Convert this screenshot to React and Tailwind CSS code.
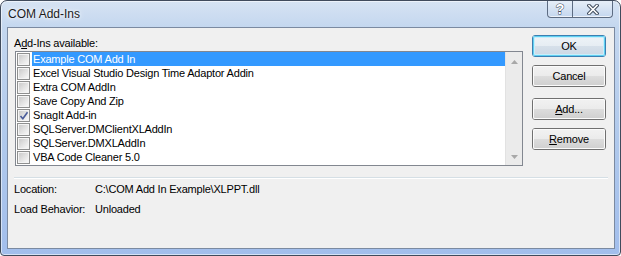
import React from 'react';

const items = [
  { label: 'Example COM Add In', sel: true },
  { label: 'Excel Visual Studio Design Time Adaptor Addin' },
  { label: 'Extra COM AddIn' },
  { label: 'Save Copy And Zip' },
  { label: 'SnagIt Add-in', checked: true },
  { label: 'SQLServer.DMClientXLAddIn' },
  { label: 'SQLServer.DMXLAddIn' },
  { label: 'VBA Code Cleaner 5.0' },
];

function Checkbox({ checked }) {
  return (
    <div className="relative w-[13px] h-[13px] shrink-0 border border-[#8e8f8f] bg-[#f4f4f4] p-px">
      <div className="w-full h-full bg-[linear-gradient(135deg,#cbcbcb_0%,#e4e4e4_55%,#f7f7f7_100%)]" />
      {checked && (
        <svg className="absolute left-[1px] top-[1px]" width="10" height="10" viewBox="0 0 10 10">
          <path d="M1.5 5 L3.8 7.8 L8.5 1.2" fill="none" stroke="#4a5c9a" strokeWidth="1.6" strokeLinejoin="round" />
        </svg>
      )}
    </div>
  );
}

function Btn({ children, def }) {
  return (
    <div
      className={`h-[22px] w-[74px] rounded-[3px] border p-0 ${def ? 'border-[#3c7fb1]' : 'border-[#707070]'}`}
    >
      <div
        className={`w-full h-full rounded-[2px] flex items-center justify-center text-black ${
          def
            ? 'bg-[linear-gradient(180deg,#eef3f7_0%,#e6edf3_50%,#d6e0ea_50%,#ccd8e4_100%)] shadow-[inset_0_0_0_1px_#5fd0f2,inset_0_0_0_2px_#c8eefb]'
            : 'bg-[linear-gradient(180deg,#f2f2f2_0%,#ebebeb_50%,#dddddd_50%,#cfcfcf_100%)] shadow-[inset_0_0_0_1px_#fbfbfb]'
        }`}
      >
        {children}
      </div>
    </div>
  );
}

export default function App() {
  return (
    <div className="w-[621px] h-[256px] bg-white font-['Liberation_Sans',Arial,sans-serif] text-[11px] tracking-[-0.2px] text-black">
      <div className="w-full h-full flex flex-col rounded-t-[7px] rounded-b-[4px] border border-[#404b5c] bg-[linear-gradient(180deg,#d6e3f3_0px,#c4d7ef_26px,#b0c9ec_55%,#a2beec_100%)] shadow-[inset_0_0_0_1px_rgba(255,255,255,0.55)]">
        {/* Title bar */}
        <div className="h-[26px] flex items-start justify-between">
          <div className="pl-[7px] h-[26px] leading-[26px] text-[12px] tracking-normal text-[#1b1b1b] [text-shadow:0_0_6px_#fff,0_0_3px_#fff]">
            COM Add-Ins
          </div>
          <div className="mr-[7px] flex h-[17px] border border-t-0 border-[#5d6c82] rounded-b-[4px] overflow-hidden bg-[linear-gradient(180deg,#e6eef8_0%,#d6e3f3_50%,#c4d7ef_100%)] shadow-[inset_0_-1px_0_rgba(255,255,255,0.7)]">
            <div className="w-[25px] h-full flex items-center justify-center border-r border-[#5d6c82]">
              <svg width="10" height="14" viewBox="0 0 10 14">
                <text x="5" y="12" textAnchor="middle" fontSize="14" fontWeight="bold" fontFamily="Liberation Sans, Arial, sans-serif" fill="#ffffff" stroke="#3e4a5c" strokeWidth="1" paintOrder="stroke">?</text>
              </svg>
            </div>
            <div className="w-[39px] h-full flex items-center justify-center">
              <svg width="12" height="11" viewBox="0 0 12 11">
                <path d="M2 1.5 L10 9.5 M10 1.5 L2 9.5" stroke="#3e4a5c" strokeWidth="3.6" strokeLinecap="square" />
                <path d="M2 1.5 L10 9.5 M10 1.5 L2 9.5" stroke="#ffffff" strokeWidth="1.6" strokeLinecap="square" />
              </svg>
            </div>
          </div>
        </div>

        {/* Body */}
        <div className="flex-1 pl-[6px] pr-[5px] pb-[6px] flex">
          <div className="flex-1 border border-[#7b8aa1] bg-[#f0f0f0] flex flex-col">
            <div className="pt-[7px] pl-[7px] pr-[8px] flex">
              <div className="w-[508px] flex flex-col">
                <div className="h-[16px] leading-[16px] -ml-px">
                  A<span className="underline underline-offset-[1px]">d</span>d-Ins available:
                </div>
                <div className="h-[115px] border border-[#828790] bg-white flex">
                  <div className="flex-1 flex flex-col">
                    {items.map((it) => (
                      <div key={it.label} className="h-[14px] flex items-center">
                        <div className="ml-px">
                          <Checkbox checked={it.checked} />
                        </div>
                        <div
                          className={`ml-[2px] pl-px flex-1 h-[14px] leading-[14px] whitespace-nowrap ${
                            it.sel ? 'bg-[#3399ff] text-white' : ''
                          }`}
                        >
                          {it.label}
                        </div>
                      </div>
                    ))}
                  </div>
                  <div className="w-[17px] bg-[#ebebeb] border-l border-[#e2e2e2] flex flex-col justify-between items-center pt-[8px] pb-[6px]">
                    <svg width="7" height="4" viewBox="0 0 7 4">
                      <path d="M3.5 0 L7 4 L0 4 Z" fill="#a8a8a8" />
                    </svg>
                    <svg width="7" height="4" viewBox="0 0 7 4">
                      <path d="M0 0 L7 0 L3.5 4 Z" fill="#a8a8a8" />
                    </svg>
                  </div>
                </div>
              </div>
              <div className="ml-[9px] flex flex-col">
                <Btn def>OK</Btn>
                <div className="mt-[8px]">
                  <Btn>Cancel</Btn>
                </div>
                <div className="mt-[11px]">
                  <Btn>
                    <span className="underline underline-offset-[1px]">A</span>dd...
                  </Btn>
                </div>
                <div className="mt-[8px]">
                  <Btn>
                    <span className="underline underline-offset-[1px]">R</span>emove
                  </Btn>
                </div>
              </div>
            </div>

            <div className="mt-[11px] mx-[6px] h-px bg-[#d5dfe5]" />
            <div className="mx-[6px] h-px bg-white" />

            <div className="flex pl-[6px] h-[20px] leading-[20px]">
              <div className="w-[81px]">Location:</div>
              <div>C:\COM Add In Example\XLPPT.dll</div>
            </div>
            <div className="flex pl-[6px] h-[20px] leading-[20px]">
              <div className="w-[81px]">Load Behavior:</div>
              <div>Unloaded</div>
            </div>
          </div>
        </div>
      </div>
    </div>
  );
}
